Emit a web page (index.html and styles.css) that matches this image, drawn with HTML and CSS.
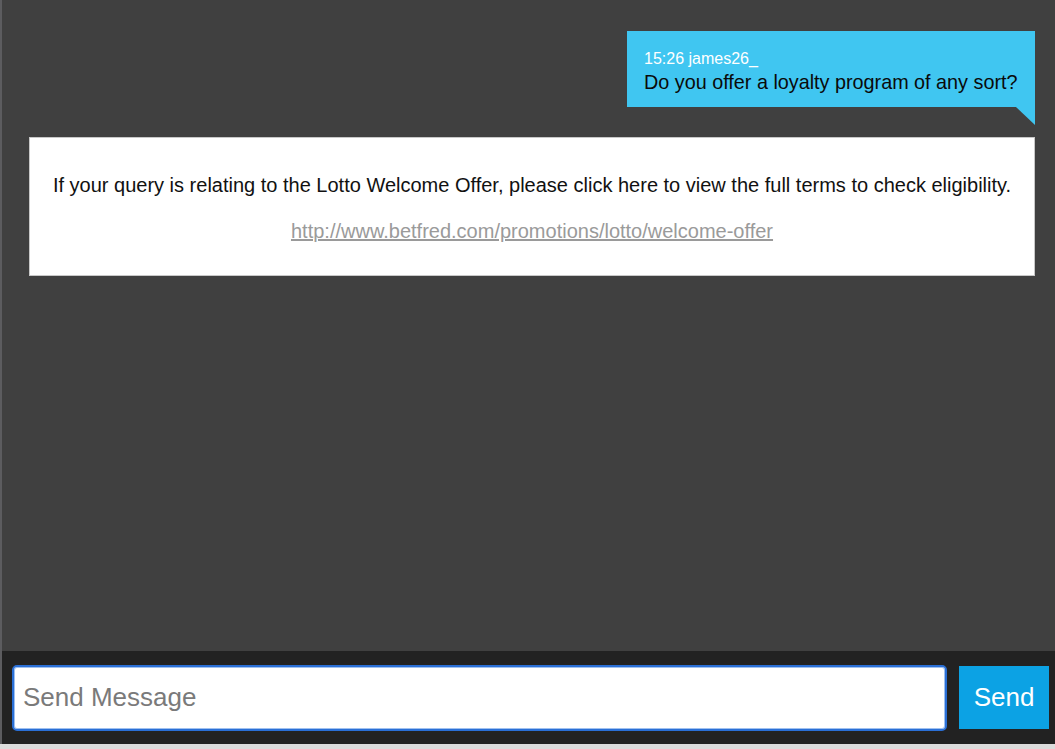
FILE: index.html
```html
<!DOCTYPE html>
<html lang="en">
<head>
<meta charset="UTF-8" />
<meta name="viewport" content="width=device-width, initial-scale=1.0" />
<title>Live Chat</title>
<link rel="stylesheet" href="styles.css">
</head>
<body>
  <div class="chat-window">
    <div class="messages">
      <div class="bubble-row">
        <div class="bubble">
          <div class="bubble-meta">15:26 james26_</div>
          <div class="bubble-text">Do you offer a loyalty program of any sort?</div>
        </div>
      </div>

      <div class="notice">
        <p>If your query is relating to the Lotto Welcome Offer, please click here to view the full terms to check eligibility.</p>
        <a href="#">http://www.betfred.com/promotions/lotto/welcome-offer</a>
      </div>
    </div>

    <form class="composer">
      <input type="text" class="message-input" placeholder="Send Message">
      <button type="button" class="send-btn">Send</button>
    </form>
  </div>
</body>
</html>
```

FILE: styles.css
```css
* {
  box-sizing: border-box;
}

html, body {
  height: 100%;
}

body {
  margin: 0;
  background-color: #dcdcdc;
  font-family: "Liberation Sans", Arial, sans-serif;
}

.chat-window {
  height: 744px;
  display: flex;
  flex-direction: column;
  background-color: #404040;
  border-left: 2px solid #5c5c5f;
}

.messages {
  flex: 1;
  padding: 31px 20px 0 27px;
}

.bubble-row {
  display: flex;
  justify-content: flex-end;
  margin-bottom: 30px;
}

.bubble {
  position: relative;
  background: #40c6f1;
  padding: 19px 17px 13px 17px;
  min-width: 408px;
}

/* little tail under the bubble */
.bubble::after {
  content: "";
  position: absolute;
  right: 0;
  bottom: -18px;
  border-top: 18px solid #40c6f1;
  border-left: 19px solid transparent;
}

.bubble-meta {
  color: #ffffff;
  font-size: 16px;
  line-height: 18px;
  margin-bottom: 2px;
}

.bubble-text {
  color: #0a0a0a;
  font-size: 19.8px;
  line-height: 24px;
}

.notice {
  background: #ffffff;
  border: 1px solid #c8c8c8;
  text-align: center;
  padding: 35px 10px 32px;
}

.notice p {
  margin: 0 0 22px;
  color: #111111;
  font-size: 20px;
  line-height: 24px;
}

.notice a {
  display: inline-block;
  color: #9a9a9a;
  font-size: 20px;
  line-height: 24px;
}

.composer {
  display: flex;
  align-items: center;
  gap: 12px;
  height: 93px;
  margin: 0;
  padding: 0 6px 0 10px;
  background-color: #222222;
}

.message-input {
  flex: 1;
  height: 66px;
  border: 2px solid #2a6fd6;
  border-radius: 5px;
  box-shadow: inset 0 0 0 1px #9fc0ef;
  background: #ffffff;
  padding: 0 9px;
  font-family: "Liberation Sans", Arial, sans-serif;
  font-size: 26px;
  color: #333333;
  outline: none;
}

.message-input::placeholder {
  color: #7a7a7a;
}

.send-btn {
  width: 90px;
  height: 63px;
  border: none;
  background: #0ca2e4;
  color: #ffffff;
  font-family: "Liberation Sans", Arial, sans-serif;
  font-size: 26px;
  cursor: pointer;
}
```
